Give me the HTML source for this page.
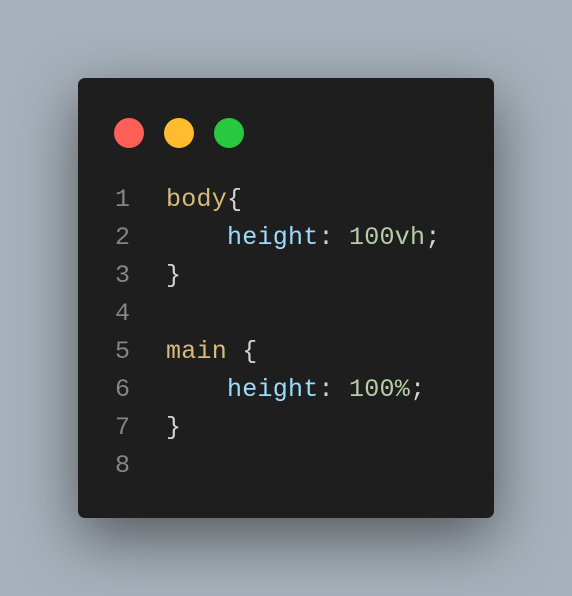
<!DOCTYPE html>
<html><head><style>
html,body{margin:0;width:572px;height:596px;overflow:hidden;background:#a7b1bb;}
.card{position:absolute;left:78px;top:78px;width:416px;height:440px;background:#1e1e1e;border-radius:7px;box-shadow:0 20px 60px rgba(0,0,0,0.5);}
.dot{position:absolute;top:40px;width:30px;height:30px;border-radius:50%;}
.ln,.tx{position:absolute;top:103px;font-family:"Liberation Mono",monospace;font-size:25px;line-height:38px;letter-spacing:0.25px;white-space:pre;color:#d4d4d4;}
.ln{left:37px;color:#858585;}
.tx{left:88px;}
.s{color:#d7ba7d}.p{color:#9cdcfe}.n{color:#b5cea8}
</style></head><body>
<div class="card">
<div class="dot" style="left:36px;background:#ff5f57"></div>
<div class="dot" style="left:86px;background:#febc2e"></div>
<div class="dot" style="left:136px;background:#28c840"></div>
<div class="ln">1
2
3
4
5
6
7
8</div>
<div class="tx"><span class="s">body</span>{
    <span class="p">height</span>: <span class="n">100vh</span>;
}

<span class="s">main</span> {
    <span class="p">height</span>: <span class="n">100%</span>;
}</div>
</div>
</body></html>
